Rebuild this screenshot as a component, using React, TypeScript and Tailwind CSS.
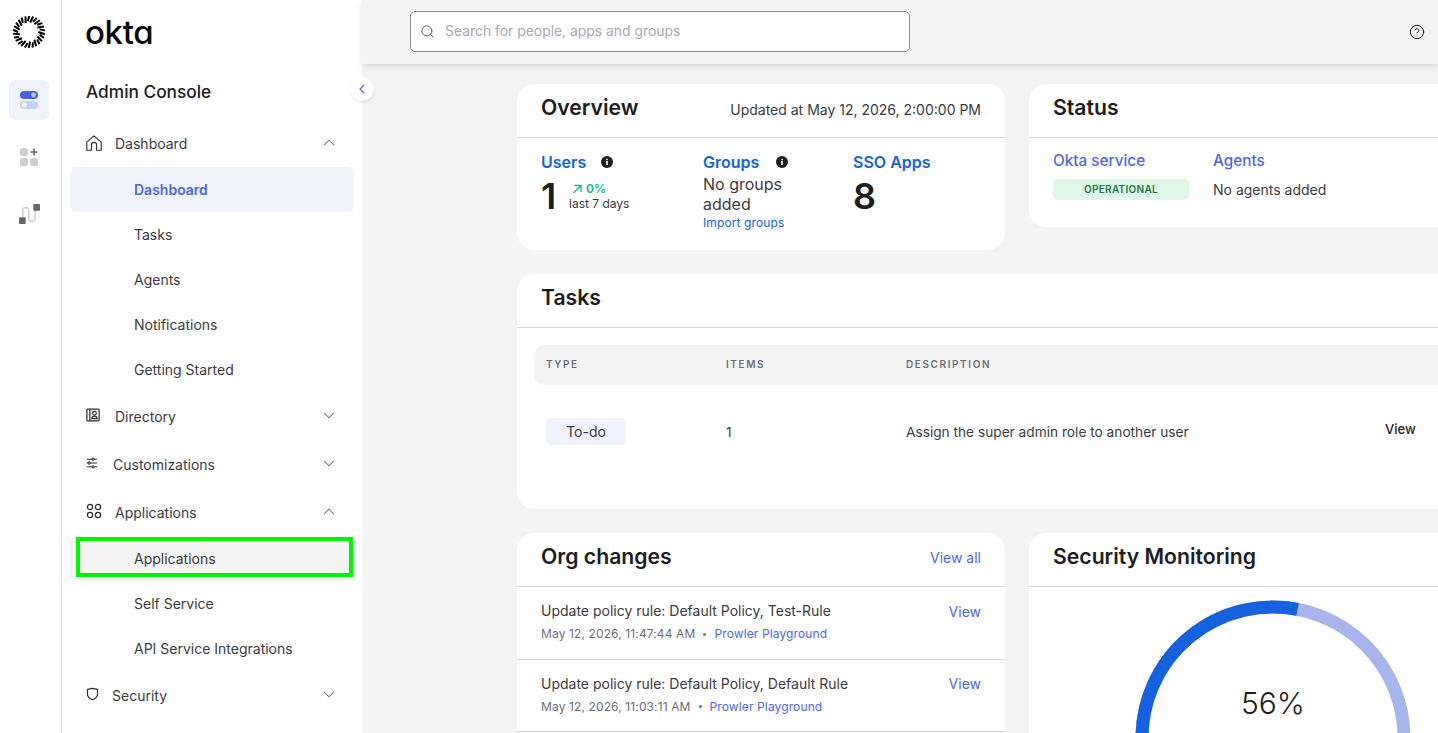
import React from 'react';
import { CircleHelp, Search, ChevronLeft } from 'lucide-react';

const HomeIcon = () => (
  <svg width="16" height="16" viewBox="0 0 16 16" fill="none" stroke="#2f2f35" strokeWidth="1.1" strokeLinejoin="round">
    <path d="M0.8 7.2 8 0.8l7.2 6.4v8H10.6V10a2.6 2.6 0 0 0-5.2 0v5.2H0.8z" />
  </svg>
);

const DirectoryIcon = () => (
  <svg className="-mt-[3px]" width="14" height="14" viewBox="0 0 16 16" fill="none" stroke="#2f2f35" strokeWidth="1.4">
    <rect x="1" y="1.2" width="14" height="13.6" rx="1.2" />
    <path d="M4.4 1.2v13.6" />
    <circle cx="9.7" cy="6" r="2.1" />
    <path d="M6.6 12.2c.3-2 1.5-3 3.1-3s2.8 1 3.1 3z" />
  </svg>
);

const SlidersIcon = () => (
  <svg className="-mt-[2px]" width="12" height="12" viewBox="0 0 14 14" fill="none" stroke="#2f2f35" strokeWidth="1.2">
    <path d="M1 2.6h6M9.6 2.6H13M1 7h1.4M5 7h8M1 11.4h6M9.6 11.4H13" />
    <circle cx="8.3" cy="2.6" r="1.3" />
    <circle cx="3.7" cy="7" r="1.3" />
    <circle cx="8.3" cy="11.4" r="1.3" />
  </svg>
);

const AppsIcon = () => (
  <svg className="-mt-[2px]" width="16" height="16" viewBox="0 0 16 16" fill="none" stroke="#2f2f35" strokeWidth="1.3">
    <circle cx="4" cy="4" r="2.6" />
    <circle cx="12" cy="4" r="2.6" />
    <circle cx="4" cy="12" r="2.6" />
    <circle cx="12" cy="12" r="2.6" />
  </svg>
);

const ShieldIcon = () => (
  <svg className="-mt-[2px]" width="13" height="14" viewBox="0 0 14 14" fill="none" stroke="#2f2f35" strokeWidth="1.3" strokeLinejoin="round">
    <path d="M1.6 2 7 .9 12.4 2v5c0 3-2.3 5.1-5.4 6.2C3.9 12.1 1.6 10 1.6 7z" />
  </svg>
);

const Chevron = ({ up }: { up?: boolean }) => (
  <svg className="-mt-[2px]" width="12" height="7" viewBox="0 0 12 7" fill="none" stroke="#77777f" strokeWidth="1.1">
    <path d={up ? 'M1 6.2 6 1.2l5 5' : 'M1 .8l5 5 5-5'} />
  </svg>
);

const InfoDot = () => (
  <svg width="12" height="12" viewBox="0 0 12 12">
    <circle cx="6" cy="6" r="6" fill="#1d1d21" />
    <rect x="5.2" y="5" width="1.6" height="4" fill="#fff" />
    <rect x="5.2" y="2.8" width="1.6" height="1.5" fill="#fff" />
  </svg>
);

const OktaBurst = () => {
  const rays = Array.from({ length: 26 }, (_, i) => (i * 360) / 26);
  return (
    <svg width="34" height="34" viewBox="0 0 34 34">
      {rays.map((a, i) => {
        const r = (a * Math.PI) / 180;
        const inner = i % 2 === 0 ? 9.5 : 11;
        const tilt = r + 0.14;
        return (
          <line
            key={a}
            x1={17 + inner * Math.cos(r)}
            y1={17 + inner * Math.sin(r)}
            x2={17 + 16 * Math.cos(tilt)}
            y2={17 + 16 * Math.sin(tilt)}
            stroke="#000"
            strokeWidth="2"
          />
        );
      })}
    </svg>
  );
};

const ToggleIcon = () => (
  <svg width="18" height="20" viewBox="0 0 18 20">
    <rect x="0" y="1" width="18" height="8" rx="4" fill="#4a5fe3" />
    <circle cx="13.5" cy="5" r="2.4" fill="#b9c4f5" />
    <rect x="0" y="11" width="18" height="8" rx="4" fill="#c6cff7" />
    <circle cx="4.3" cy="15" r="2.4" fill="#fff" />
  </svg>
);

const AddAppsIcon = () => (
  <svg width="18" height="18" viewBox="0 0 18 18">
    <rect x="0" y="0" width="8" height="8" rx="2" fill="#cfcfcf" />
    <rect x="0" y="10" width="8" height="8" rx="2" fill="#cfcfcf" />
    <rect x="10" y="10" width="8" height="8" rx="2" fill="#cfcfcf" />
    <path d="M14 0.5v7M10.5 4h7" stroke="#666" strokeWidth="1.6" />
  </svg>
);

const FlowIcon = () => (
  <svg width="21" height="21" viewBox="0 0 22 22" fill="none">
    <path d="M4 15V7a3.2 3.2 0 0 1 6.4 0v8a3.2 3.2 0 0 0 6.4 0V6" stroke="#cfcfcf" strokeWidth="1.6" />
    <rect x="15" y="0" width="7" height="7" rx="1" fill="#666" />
    <rect x="0" y="14" width="7" height="7" rx="1" fill="#666" />
  </svg>
);

function NavHeader({ icon, label, open, gap }: { icon: React.ReactNode; label: string; open?: boolean; gap: string }) {
  return (
    <div className="flex h-12 items-center pl-[24px] pr-[27px] text-[14px] text-[#3b3b41]">
      <span className={`flex w-[16px] shrink-0 items-center justify-start ${gap}`}>{icon}</span>
      <span className="flex-1">{label}</span>
      <Chevron up={open} />
    </div>
  );
}

function SubItem({ label, active, outlined }: { label: string; active?: boolean; outlined?: boolean }) {
  return (
    <div
      className={`relative ml-[8px] mr-[8px] flex h-[45px] items-center rounded-md pl-[64px] text-[14px] ${
        active ? 'bg-[#f0f2fc] font-semibold text-[#4f66e5]' : outlined ? 'bg-[#f4f4f4] text-[#3b3b41]' : 'text-[#3b3b41]'
      }`}
    >
      {label}
      {outlined && <div className="absolute left-[6px] top-[1px] h-[40px] w-[277px] border-4 border-[#00f400]" />}
    </div>
  );
}

function CardHead({ title, right }: { title: string; right?: React.ReactNode }) {
  return (
    <div className="flex h-[54px] items-center justify-between border-b border-[#d7d7dc] px-[24px] pb-[5px]">
      <h2 className="text-[21.2px] font-semibold text-[#1d1d21]">{title}</h2>
      {right}
    </div>
  );
}

function ChangeRow({ title, date, viewClass }: { title: string; date: string; viewClass: string }) {
  return (
    <div className="flex h-[72.5px] items-start justify-between border-b border-[#d7d7dc] px-[24px] pt-[14px]">
      <div>
        <div className="text-[14px] leading-[20px] text-[#3b3b41]">{title}</div>
        <div className="mt-[5px] flex items-center text-[12px] leading-[16px] tracking-[0.01em] text-[#6e6e78]">
          {date}
          <span className="mx-[8px] h-[3px] w-[3px] rounded-full bg-[#6e6e78]" />
          <span className="text-[#4f66e5]">Prowler Playground</span>
        </div>
      </div>
      <span className={`text-[14px] leading-[20px] text-[#4f66e5] ${viewClass}`}>View</span>
    </div>
  );
}

export default function App() {
  return (
    <div className="relative flex h-[733px] w-[1438px] overflow-hidden bg-[#f4f4f4] [font-family:Inter,sans-serif]">
      {/* Rail */}
      <div className="flex w-[62px] shrink-0 flex-col items-center border-r border-[#dedede] bg-white pr-[3px]">
        <div className="mt-[15px]">
          <OktaBurst />
        </div>
        <div className="mt-[31px] flex h-[40px] w-[40px] items-center justify-center rounded-md bg-[#f0f2fc]">
          <ToggleIcon />
        </div>
        <div className="mt-[28px]">
          <AddAppsIcon />
        </div>
        <div className="mt-[38px]">
          <FlowIcon />
        </div>
      </div>

      {/* Sidebar */}
      <div className="flex w-[300px] shrink-0 flex-col bg-white">
        <div className="flex h-[65px] items-center pl-[23px]">
          <span className="text-[33px] font-medium leading-none tracking-[-0.01em] text-[#0a0a0a] [font-feature-settings:'cv11']">okta</span>
        </div>
        <div className="flex h-[54px] items-center pl-[24px] text-[17.3px] font-medium text-[#1d1d21]">Admin Console</div>
        <NavHeader icon={<HomeIcon />} label="Dashboard" open gap="mr-[13px]" />
        <div>
          <SubItem label="Dashboard" active />
          <SubItem label="Tasks" />
          <SubItem label="Agents" />
          <SubItem label="Notifications" />
          <SubItem label="Getting Started" />
        </div>
        <NavHeader icon={<DirectoryIcon />} label="Directory" gap="mr-[13px]" />
        <NavHeader icon={<SlidersIcon />} label="Customizations" gap="mr-[11px]" />
        <NavHeader icon={<AppsIcon />} label="Applications" open gap="mr-[13px]" />
        <div>
          <SubItem label="Applications" outlined />
          <SubItem label="Self Service" />
          <SubItem label="API Service Integrations" />
        </div>
        <NavHeader icon={<ShieldIcon />} label="Security" gap="mr-[10px]" />
      </div>

      {/* Collapse button */}
      <div className="absolute left-[350px] top-[77px] flex h-[24px] w-[24px] items-center justify-center rounded-full bg-white shadow-sm">
        <ChevronLeft size={16} strokeWidth={1.6} color="#4f66e5" />
      </div>

      {/* Main */}
      <div className="flex min-w-0 flex-1 flex-col">
        <div className="flex h-[64px] shrink-0 items-center justify-between bg-[#f4f4f4] pl-[48px] pr-[13px] pb-[1px] shadow-[0_2px_6px_rgba(0,0,0,0.12)]">
          <div className="flex h-[41px] w-[500px] items-center gap-[10px] rounded-[5px] border border-[#8c8c96] bg-white pl-[9px] text-[13.9px] text-[#a9a9b0]">
            <Search size={15} strokeWidth={1.5} color="#55555c" />
            <span>Search for people, apps and groups</span>
          </div>
          <CircleHelp size={16} strokeWidth={1.5} color="#1d1d21" />
        </div>

        <div className="flex w-[1000px] flex-col gap-[24px] pl-[155px] pt-[20px]">
          <div className="flex items-start gap-[24px]">
            {/* Overview */}
            <div className="h-[166px] w-[488px] shrink-0 rounded-[18px] bg-white">
              <CardHead title="Overview" right={<span className="mt-[2px] text-[14px] text-[#3b3b41]">Updated at May 12, 2026, 2:00:00 PM</span>} />
              <div className="flex pl-[24px] pt-[14px]">
                <div className="w-[162px]">
                  <div className="flex items-center text-[16px] font-semibold leading-[20px] text-[#1662dd]">
                    <span className="w-[60px]">Users</span>
                    <InfoDot />
                  </div>
                  <div className="mt-[2px] flex">
                    <span className="w-[28px] text-[36px] font-semibold leading-[44px] text-[#1d1d21]">1</span>
                    <div className="pt-[8px]">
                      <div className="flex items-center gap-[3px] pl-[2px] text-[12px] font-semibold leading-[14px] text-[#12b886]">
                        <svg width="12" height="12" viewBox="0 0 12 12" fill="none" stroke="#12b886" strokeWidth="1.3">
                          <path d="M2.5 10 10 2.5M3.5 2.5H10V9" />
                        </svg>
                        0%
                      </div>
                      <div className="text-[12px] leading-[16px] text-[#3b3b41]">last 7 days</div>
                    </div>
                  </div>
                </div>
                <div className="w-[150px]">
                  <div className="flex items-center text-[16px] font-semibold leading-[20px] text-[#1662dd]">
                    <span className="w-[73px]">Groups</span>
                    <InfoDot />
                  </div>
                  <div className="mt-[2px] text-[16px] leading-[20px] text-[#3b3b41]">
                    No groups
                    <br />
                    added
                  </div>
                  <div className="text-[12px] leading-[18px] tracking-[0.01em] text-[#1662dd]">Import groups</div>
                </div>
                <div>
                  <div className="text-[16px] font-semibold leading-[20px] text-[#1662dd]">SSO Apps</div>
                  <div className="mt-[2px] text-[36px] font-semibold leading-[44px] text-[#1d1d21]">8</div>
                </div>
              </div>
            </div>

            {/* Status */}
            <div className="h-[143px] w-[488px] shrink-0 rounded-[18px] bg-white">
              <CardHead title="Status" />
              <div className="flex pl-[24px] pt-[13px]">
                <div className="w-[160px]">
                  <div className="text-[15.3px] font-medium leading-[20px] text-[#4f66e5]">Okta service</div>
                  <div className="mt-[8px] flex h-[21px] w-[136px] items-center justify-center rounded-[5px] bg-[#dff7e6] text-[10px] font-semibold tracking-[0.03em] text-[#1a7a45]">
                    OPERATIONAL
                  </div>
                </div>
                <div>
                  <div className="text-[15.3px] font-medium leading-[20px] text-[#4f66e5]">Agents</div>
                  <div className="mt-[9px] text-[14px] leading-[20px] text-[#3b3b41]">No agents added</div>
                </div>
              </div>
            </div>
          </div>

          {/* Tasks */}
          <div className="h-[235px] w-[1000px] shrink-0 rounded-[18px] bg-white">
            <CardHead title="Tasks" />
            <div className="px-[17px] pt-[17px]">
              <div className="flex h-[40px] items-center rounded-[10px] bg-[#f4f4f4] pb-[2px] pl-[12px] text-[10px] font-semibold tracking-[0.16em] text-[#6e6e78]">
                <span className="w-[180px]">TYPE</span>
                <span className="w-[180px]">ITEMS</span>
                <span>DESCRIPTION</span>
              </div>
              <div className="mt-[33px] flex items-center pl-[12px] text-[13.7px] text-[#3b3b41]">
                <span className="w-[180px]">
                  <span className="flex h-[27px] w-[80px] items-center justify-center rounded-[5px] bg-[#f0f2fe] text-[14px]">To-do</span>
                </span>
                <span className="mt-[2px] w-[180px]">1</span>
                <span className="mt-[2px] w-[479px]">Assign the super admin role to another user</span>
                <span className="-mt-[4px] text-[13px] font-medium text-[#1d1d21]">View</span>
              </div>
            </div>
          </div>

          <div className="flex items-start gap-[24px]">
            {/* Org changes */}
            <div className="w-[488px] shrink-0 rounded-t-[18px] bg-white">
              <CardHead title="Org changes" right={<span className="mt-[1px] text-[14px] text-[#4f66e5]">View all</span>} />
              <ChangeRow title="Update policy rule: Default Policy, Test-Rule" date="May 12, 2026, 11:47:44 AM" viewClass="mt-[1px]" />
              <ChangeRow title="Update policy rule: Default Policy, Default Rule" date="May 12, 2026, 11:03:11 AM" viewClass="" />
            </div>

            {/* Security Monitoring */}
            <div className="w-[488px] shrink-0 rounded-t-[18px] bg-white">
              <CardHead title="Security Monitoring" />
              <div className="relative flex h-[160px] justify-center pt-[13px]">
                <svg width="276" height="140" viewBox="0 0 276 140" fill="none">
                  <path d="M7 138A131 131 0 0 1 269 138" stroke="#a8b5ec" strokeWidth="13" />
                  <path d="M7 138A131 131 0 0 1 162.6 9.3" stroke="#1662dd" strokeWidth="13" />
                </svg>
                <span className="absolute left-0 right-0 top-[96px] text-center text-[30px] font-light leading-[40px] text-[#1d1d21]">56%</span>
              </div>
            </div>
          </div>
        </div>
      </div>
    </div>
  );
}
